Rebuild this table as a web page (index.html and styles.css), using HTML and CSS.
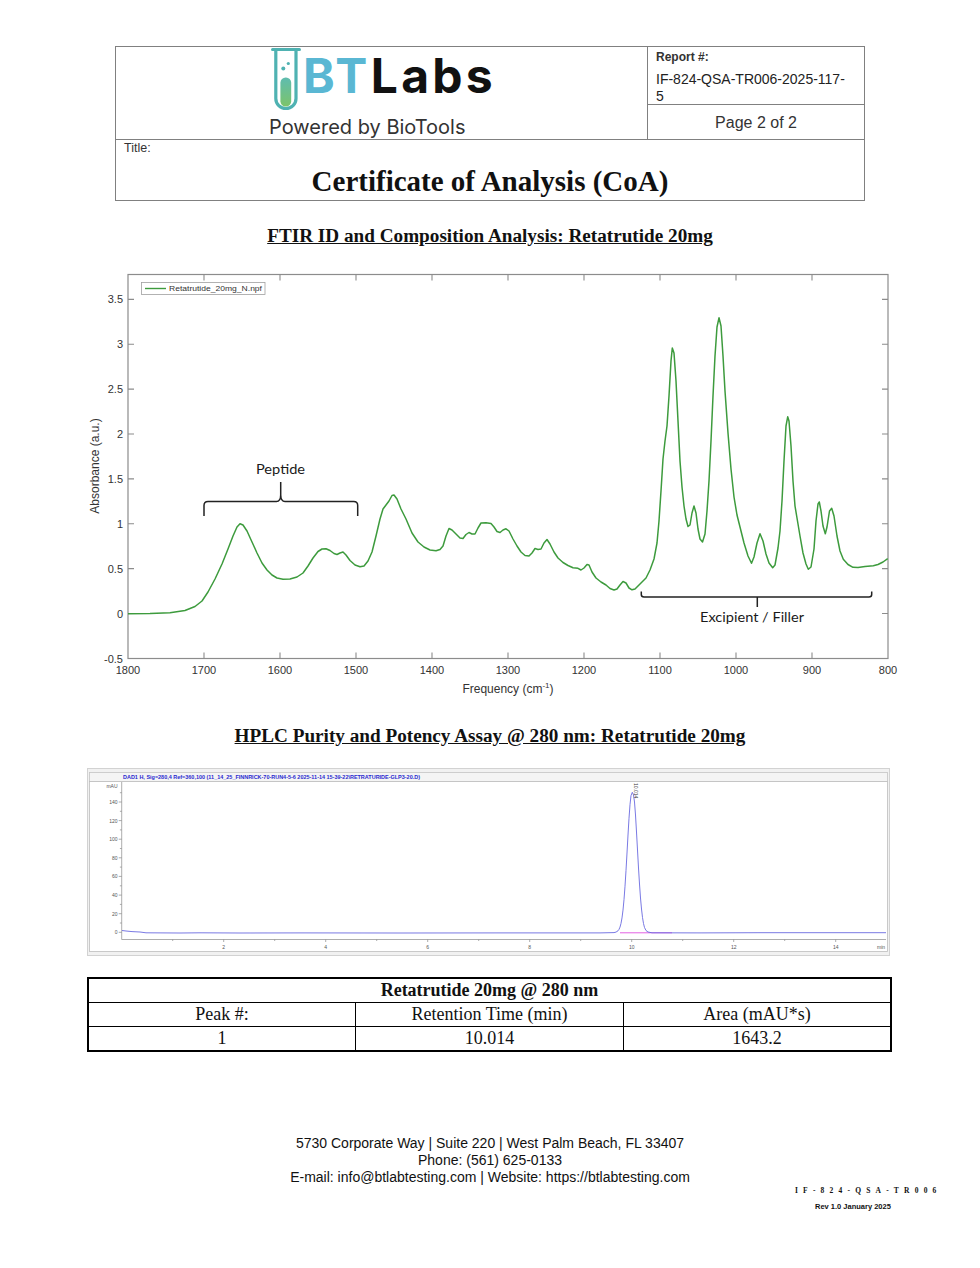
FILE: index.html
```html
<!DOCTYPE html>
<html>
<head>
<meta charset="utf-8">
<link rel="stylesheet" href="styles.css">
</head>
<body>
<div class="page">
  <div class="header">
    <div class="hrow1">
      <div class="logo-cell">
        <div class="logo-row">
          <svg class="tube" width="30" height="66" viewBox="0 0 30 66">
            <defs>
              <linearGradient id="liq" x1="0" y1="0" x2="0" y2="1">
                <stop offset="0" stop-color="#5fbcb0"/>
                <stop offset="1" stop-color="#7cc46a"/>
              </linearGradient>
            </defs>
            <path d="M1.5,2.5 H28.5" stroke="#4fb2b2" stroke-width="3" stroke-linecap="round" fill="none"/>
            <path d="M4.8,3 V51.4 A10.1,10.1 0 0 0 25,51.4 V3" stroke="#4fb2b2" stroke-width="3.2" fill="none"/>
            <rect x="9.4" y="30.5" width="10.8" height="29" rx="5.2" fill="url(#liq)"/>
            <circle cx="17.3" cy="16.5" r="1.6" fill="#4fb2b2"/>
            <circle cx="12.3" cy="21.5" r="2" fill="#4fb2b2"/>
          </svg>
          <span class="brand"><span class="bt">BT</span>Labs</span>
        </div>
        <p class="powered">Powered by BioTools</p>
      </div>
      <div class="report-col">
        <div class="report-cell">
          <p class="report-label">Report #:</p>
          <p class="report-no">IF-824-QSA-TR006-2025-117-<br>5</p>
        </div>
        <div class="page-cell">Page 2 of 2</div>
      </div>
    </div>
    <div class="hrow2">
      <p class="title-label">Title:</p>
      <h1 class="doc-title">Certificate of Analysis (CoA)</h1>
    </div>
  </div>

  <h2 class="section-title ftir-title">FTIR ID and Composition Analysis: Retatrutide 20mg</h2>

  <svg class="ftir" width="980" height="458" viewBox="0 247 980 458">
    <rect x="128" y="273.5" width="760" height="384" fill="#fff" stroke="#8c8c8c" stroke-width="1.2"/>
    <g stroke="#8c8c8c" stroke-width="1.1">
      <path d="M204,657.5v-6 M280,657.5v-6 M356,657.5v-6 M432,657.5v-6 M508,657.5v-6 M584,657.5v-6 M660,657.5v-6 M736,657.5v-6 M812,657.5v-6"/>
      <path d="M204,273.5v6 M280,273.5v6 M356,273.5v6 M432,273.5v6 M508,273.5v6 M584,273.5v6 M660,273.5v6 M736,273.5v6 M812,273.5v6"/>
      <path d="M128,612.5h6 M128,567.6h6 M128,522.8h6 M128,477.9h6 M128,433h6 M128,388.1h6 M128,343.3h6 M128,298.4h6"/>
      <path d="M888,612.5h-6 M888,567.6h-6 M888,522.8h-6 M888,477.9h-6 M888,433h-6 M888,388.1h-6 M888,343.3h-6 M888,298.4h-6"/>
    </g>
    <g class="tick-y" text-anchor="end">
      <text x="123" y="662">-0.5</text>
      <text x="123" y="616.5">0</text>
      <text x="123" y="571.6">0.5</text>
      <text x="123" y="526.8">1</text>
      <text x="123" y="481.9">1.5</text>
      <text x="123" y="437">2</text>
      <text x="123" y="392.1">2.5</text>
      <text x="123" y="347.3">3</text>
      <text x="123" y="302.4">3.5</text>
    </g>
    <g class="tick-x" text-anchor="middle">
      <text x="128" y="673">1800</text>
      <text x="204" y="673">1700</text>
      <text x="280" y="673">1600</text>
      <text x="356" y="673">1500</text>
      <text x="432" y="673">1400</text>
      <text x="508" y="673">1300</text>
      <text x="584" y="673">1200</text>
      <text x="660" y="673">1100</text>
      <text x="736" y="673">1000</text>
      <text x="812" y="673">900</text>
      <text x="888" y="673">800</text>
    </g>
    <text class="axis-title" x="508" y="692" text-anchor="middle">Frequency (cm<tspan dy="-5" font-size="8">-1</tspan><tspan dy="5">)</tspan></text>
    <text class="axis-title" transform="translate(99,465) rotate(-90)" text-anchor="middle">Absorbance (a.u.)</text>

    <rect x="141.5" y="281.5" width="123.5" height="12" fill="#fff" stroke="#a0a0a0" stroke-width="0.8"/>
    <path d="M145,287.5 H166" stroke="#3d9b3d" stroke-width="1.4"/>
    <text class="legend" x="169" y="290.3" textLength="93" lengthAdjust="spacingAndGlyphs">Retatrutide_20mg_N.npf</text>

    <polyline fill="none" stroke="#3d9b3d" stroke-width="1.5" stroke-linejoin="round" points="128,612.7 150,612.6 170,611.8 185,609.5 195,605.5 202,600 208,591 215,578 222,563 228,548 233,535 237,526 240,522.7 243,524 247,530 252,541 257,552 262,562 267,569 272,574 277,577 283,578.3 290,578 297,576 303,572 308,565 313,557 318,550.5 322,548 326,547.7 330,549.5 334,552.5 337,553.5 340,552 343,551 346,554 350,559.5 355,564 360,565.8 364,565 368,560 372,551 376,535 380,518 383,508 386,504 389,500 392,494.5 394,494 397,498 401,508 406,518 412,532 418,541 424,546 430,549 436,549.8 440,548.5 443,545 446,535 449,527.5 452,529 456,533 460,537 463,537.5 466,533.5 469,531.5 472,533 475,533 478,527 481,522 486,521.8 491,522.5 494,526 497,530.5 500,531.5 503,529 506,527.8 509,530 513,538 517,545 521,551 525,554.5 529,555 532,552 535,547.5 538,548.5 541,548 544,542 547,538.5 550,543 554,551 558,557 563,561.5 568,564.5 573,566.7 578,567.3 581,569 584,567 587,563.5 589,564 592,571 596,577 601,581 606,584 610,587.5 614,589 617,588 620,584 623,580.5 626,582 629,587 632,588.8 635,588 638,585 642,581 646,577 650,569 654,558 657,542 659,520 661,490 663,458 665,440 667,425 669,395 671,360 672.3,347 674,352 676,380 678,420 680,460 682,486 684,505 686,518 688,525.5 690,524 692,512 694,505 696,512 698,528 700,538 702.5,541 705,533 707,510 709,480 711,440 713,395 715,355 717,326 719,316.8 721,325 723,355 725,390 728,432 731,468 734,496 737,514 740,526 744,542 748,555 751.5,562.3 754,556 757,542 760,532.7 763,540 766,553 769,562 772.7,566.7 775,564 778,547 780,530 782,500 784,460 786,425 787.7,415.8 789,420 791,445 793,480 795,505 797,517 800,535 803,552 806,563 808.3,568.3 811,566 814,548 816,520 818,503 819.3,501 821,510 823,525 825.3,532.7 827,526 829.5,510 831.7,507.3 834,515 837,535 840,550 843.3,558.3 848,563.5 853,566.3 858,566.5 865,565.5 873.3,564.7 878,563.5 883,561 887.7,557.7"/>

    <g fill="none" stroke="#222" stroke-width="1.5">
      <path d="M204,515 V504.5 Q204,500.5 208,500.5 H276.5 Q280.6,500.5 280.7,494 V481 M280.7,494 Q280.8,500.5 285,500.5 H353.7 Q357.7,500.5 357.7,504.5 V515"/>
      <path d="M641.3,590.5 V593.5 Q641.3,596 644,596 H869 Q871.7,596 871.7,593.5 V590.5 M757.3,596 V606"/>
    </g>
    <text class="note" x="280.5" y="473" text-anchor="middle" textLength="49" lengthAdjust="spacingAndGlyphs">Peptide</text>
    <text class="note" x="752" y="620.5" text-anchor="middle" textLength="104" lengthAdjust="spacingAndGlyphs">Excipient / Filler</text>
  </svg>

  <h2 class="section-title hplc-title">HPLC Purity and Potency Assay @ 280 nm: Retatrutide 20mg</h2>

  <svg class="hplc" width="980" height="213" viewBox="0 748 980 213">
    <rect x="87.5" y="768.5" width="802" height="187" fill="#f1f1f1" stroke="#d2d2d2"/>
    <rect x="89.5" y="772.5" width="798" height="9" fill="#f4f4f4" stroke="#c4c4c4" stroke-width="0.8"/>
    <rect x="89.5" y="781.5" width="798" height="170" fill="#fff" stroke="#bdbdbd" stroke-width="0.8"/>
    <text class="hplc-head" x="123" y="778.6" textLength="297" lengthAdjust="spacingAndGlyphs">DAD1 H, Sig=280,4 Ref=360,100 (11_14_25_FINNRICK-70-RUN4-5-6 2025-11-14 15-39-22\RETRATURIDE-GLP3-20.D)</text>
    <g stroke="#8a8a8a" stroke-width="0.7" fill="none">
      <path d="M121.7,782 V939.5 H886"/>
      <path d="M121.7,932.3h-3 M121.7,913.7h-3 M121.7,895.1h-3 M121.7,876.4h-3 M121.7,857.8h-3 M121.7,839.2h-3 M121.7,820.6h-3 M121.7,802h-3"/>
      <path d="M121.7,923h-1.8 M121.7,904.4h-1.8 M121.7,885.8h-1.8 M121.7,867.1h-1.8 M121.7,848.5h-1.8 M121.7,829.9h-1.8 M121.7,811.3h-1.8 M121.7,792.7h-1.8"/>
      <path d="M223.7,939.5v2.5 M325.7,939.5v2.5 M427.7,939.5v2.5 M529.7,939.5v2.5 M631.7,939.5v2.5 M733.7,939.5v2.5 M835.7,939.5v2.5"/>
      <path d="M172.7,939.5v1.5 M274.7,939.5v1.5 M376.7,939.5v1.5 M478.7,939.5v1.5 M580.7,939.5v1.5 M682.7,939.5v1.5 M784.7,939.5v1.5"/>
    </g>
    <g class="hplc-tick" text-anchor="end">
      <text x="117.5" y="787.5">mAU</text>
      <text x="117.5" y="804">140</text>
      <text x="117.5" y="822.6">120</text>
      <text x="117.5" y="841.2">100</text>
      <text x="117.5" y="859.8">80</text>
      <text x="117.5" y="878.4">60</text>
      <text x="117.5" y="897.1">40</text>
      <text x="117.5" y="915.7">20</text>
      <text x="117.5" y="934.3">0</text>
    </g>
    <g class="hplc-tick" text-anchor="middle">
      <text x="223.7" y="948.5">2</text>
      <text x="325.7" y="948.5">4</text>
      <text x="427.7" y="948.5">6</text>
      <text x="529.7" y="948.5">8</text>
      <text x="631.7" y="948.5">10</text>
      <text x="733.7" y="948.5">12</text>
      <text x="835.7" y="948.5">14</text>
      <text x="881" y="948.5">min</text>
    </g>
    <path d="M620,932.8 H672" stroke="#e050e0" stroke-width="0.9"/>
    <polyline fill="none" stroke="#6a6ae0" stroke-width="0.9" points="122,930.5 126,931 132,931.6 140,932 146,932.8 180,933 200,932.8 240,933 300,932.9 400,933 500,932.9 600,932.9 614,932.6 616,932.1 618,930.8 619,929.4 620,927.1 621,923.4 622,917.9 623,910.1 624,899.6 625,886.3 626,870.5 627,853 628,835 629,818.3 630,804.6 631,795.6 632.3,792.3 633.5,795 634.5,802 635.5,815 636.5,832 637.5,850 638.5,868 639.5,884 640.5,898 641.5,909 642.5,917.5 643.5,923.5 644.5,927.5 646,930.5 648,932 652,932.8 700,932.9 760,932.7 886,932.7"/>
    <text class="peak-label" transform="translate(633.8,783) rotate(90)">10.014</text>
  </svg>

  <table class="results">
    <tr><th colspan="3">Retatrutide 20mg @ 280 nm</th></tr>
    <tr><td>Peak #:</td><td>Retention Time (min)</td><td>Area (mAU*s)</td></tr>
    <tr><td>1</td><td>10.014</td><td>1643.2</td></tr>
  </table>

  <div class="footer">
    <p>5730 Corporate Way | Suite 220 | West Palm Beach, FL 33407</p>
    <p>Phone: (561) 625-0133</p>
    <p>E-mail: info@btlabtesting.com | Website: https://btlabtesting.com</p>
  </div>
  <p class="doc-code">IF-824-QSA-TR006</p>
  <p class="doc-rev">Rev 1.0 January 2025</p>
</div>
</body>
</html>
```

FILE: styles.css
```css
html, body {
  margin: 0;
  padding: 0;
  background: #fff;
}

.page {
  width: 980px;
  padding-top: 46px;
  font-family: "Liberation Sans", Arial, sans-serif;
  color: #222;
}

p, h1, h2 {
  margin: 0;
}

/* Header block */
.header {
  width: 748px;
  margin-left: 115px;
  border: 1px solid #808080;
}

.hrow1 {
  display: grid;
  grid-template-columns: 532px 1fr;
  height: 92px;
}

.logo-cell {
  border-right: 1px solid #808080;
  padding-left: 155px;
  display: flex;
  flex-direction: column;
}

.logo-row {
  display: flex;
  align-items: flex-start;
  height: 66px;
}

.tube {
  display: block;
  margin-top: 0;
}

.brand {
  font-family: Inter, "Open Sans", sans-serif;
  font-weight: 700;
  font-size: 48px;
  line-height: 48px;
  margin-top: 5px;
  margin-left: 2px;
  color: #111;
  letter-spacing: 3.3px;
}

.bt {
  color: #5ab7d3;
}

.powered {
  font-family: Inter, "Open Sans", sans-serif;
  font-size: 20px;
  line-height: 24px;
  color: #333;
  margin-top: 2px;
  margin-left: -2px;
}

.report-col {
  display: grid;
  grid-template-rows: 58px 1fr;
}

.report-cell {
  border-bottom: 1px solid #808080;
  padding: 2px 8px 0 8px;
}

.report-label {
  font-weight: bold;
  font-size: 12px;
  line-height: 16px;
  color: #333;
}

.report-no {
  font-size: 14px;
  line-height: 17px;
  margin-top: 6px;
  color: #222;
}

.page-cell {
  display: flex;
  align-items: center;
  justify-content: center;
  font-size: 16px;
  color: #333;
  padding-top: 1px;
}

.hrow2 {
  border-top: 1px solid #808080;
  height: 60px;
  padding-left: 8px;
}

.title-label {
  font-size: 12.5px;
  line-height: 15px;
  padding-top: 1px;
  color: #333;
}

.doc-title {
  font-family: "Liberation Serif", "Times New Roman", serif;
  font-weight: bold;
  font-size: 29px;
  line-height: 34px;
  margin-top: 8px;
  text-align: center;
  margin-left: -8px;
  color: #111;
}

/* Section titles */
.section-title {
  font-family: "Liberation Serif", "Times New Roman", serif;
  font-weight: bold;
  font-size: 19.2px;
  line-height: 24px;
  text-align: center;
  text-decoration: underline;
  color: #111;
}

.ftir-title {
  margin-top: 23px;
}

.hplc-title {
  margin-top: 18px;
}

svg.ftir, svg.hplc {
  display: block;
}

.tick-y text, .tick-x text {
  font-family: "Liberation Sans", Arial, sans-serif;
  font-size: 11px;
  fill: #333;
}

.axis-title {
  font-family: "Liberation Sans", Arial, sans-serif;
  font-size: 12px;
  fill: #333;
}

.legend {
  font-family: "Liberation Sans", Arial, sans-serif;
  font-size: 8px;
  fill: #333;
}

.note {
  font-family: Lato, "Open Sans", sans-serif;
  font-size: 14px;
  fill: #1a1a1a;
}

.hplc-head {
  font-family: "Liberation Sans", Arial, sans-serif;
  font-size: 5px;
  font-weight: bold;
  fill: #2a2ad0;
}

.hplc-tick {
  font-family: "Liberation Sans", Arial, sans-serif;
  font-size: 5px;
}

.hplc-tick text {
  fill: #555;
}

.peak-label {
  font-family: "Liberation Sans", Arial, sans-serif;
  font-size: 5px;
  fill: #333;
}

/* Results table */
.results {
  width: 805px;
  margin-left: 87px;
  margin-top: 16px;
  border-collapse: collapse;
  border: 2px solid #000;
  font-family: "Liberation Serif", "Times New Roman", serif;
  font-size: 18px;
  color: #111;
}

.results th, .results td {
  border: 1px solid #000;
  height: 23px;
  padding: 0;
  line-height: 23px;
  text-align: center;
  font-weight: normal;
}

.results th {
  font-weight: bold;
}

.results td {
  width: 33.33%;
}

/* Footer */
.footer {
  margin-top: 83px;
  text-align: center;
  font-size: 14px;
  line-height: 17px;
  color: #111;
}

.doc-code {
  padding-left: 795px;
  font-family: "Liberation Serif", "Times New Roman", serif;
  font-weight: bold;
  font-size: 7.5px;
  letter-spacing: 5.2px;
  line-height: 10px;
  margin-top: 0;
  color: #111;
}

.doc-rev {
  padding-left: 815px;
  font-weight: bold;
  font-size: 7.5px;
  line-height: 10px;
  margin-top: 6px;
  color: #111;
}
```
